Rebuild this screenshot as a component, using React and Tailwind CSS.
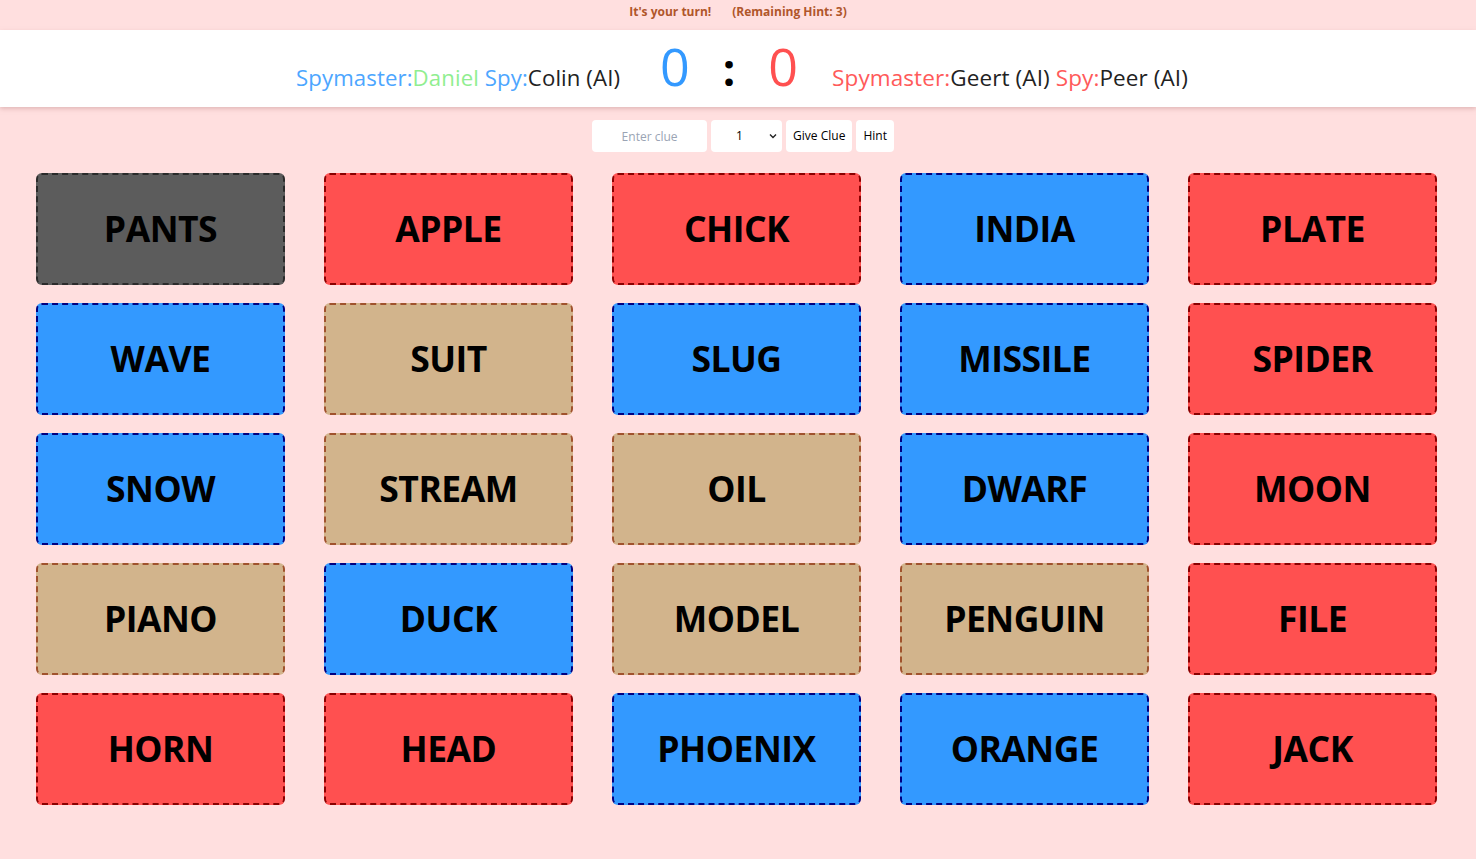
const cards = [
  ['PANTS', 'black'], ['APPLE', 'red'], ['CHICK', 'red'], ['INDIA', 'blue'], ['PLATE', 'red'],
  ['WAVE', 'blue'], ['SUIT', 'tan'], ['SLUG', 'blue'], ['MISSILE', 'blue'], ['SPIDER', 'red'],
  ['SNOW', 'blue'], ['STREAM', 'tan'], ['OIL', 'tan'], ['DWARF', 'blue'], ['MOON', 'red'],
  ['PIANO', 'tan'], ['DUCK', 'blue'], ['MODEL', 'tan'], ['PENGUIN', 'tan'], ['FILE', 'red'],
  ['HORN', 'red'], ['HEAD', 'red'], ['PHOENIX', 'blue'], ['ORANGE', 'blue'], ['JACK', 'red'],
]

const cardStyles = {
  black: 'bg-[#5c5c5c] border-[#2b2b2b]',
  red: 'bg-[#ff5050] border-[#8b0000]',
  blue: 'bg-[#3399ff] border-[#000080]',
  tan: 'bg-[#d2b48c] border-[#a0522d]',
}

function Card({ word, team }) {
  return (
    <div className={`h-[112px] rounded-[6px] border-2 border-dashed flex items-center justify-center ${cardStyles[team]}`}>
      <span className="text-[35.5px] font-bold text-black tracking-[-0.5px]">{word}</span>
    </div>
  )
}

export default function App() {
  return (
    <div className="min-h-[859px] bg-[#ffdfdf] font-['Open_Sans','DejaVu_Sans',sans-serif]">
      <div className="h-[30px] pb-[6px] flex items-center justify-center gap-[20px] text-[12px] font-bold text-[#b0562a]">
        <span>It's your turn!</span>
        <span className="ml-[1px]">(Remaining Hint: 3)</span>
      </div>

      <div className="h-[77px] bg-white shadow-[0_2px_4px_rgba(200,150,150,0.5)] flex items-end justify-center pb-[12px]">
        <div className="flex items-baseline ml-[8px]">
          <div className="text-[22.2px] tracking-[0.1px] mr-[40px]">
            <span className="text-[#4da6ff]">Spymaster:</span>
            <span className="text-[#90ee90]">Daniel</span>
            <span className="text-[#4da6ff]"> Spy:</span>
            <span className="text-[#222]">Colin (AI)</span>
          </div>
          <span className="text-[52px] leading-none text-[#3399ff]">0</span>
          <span className="text-[44px] leading-none text-black mx-[33px] font-bold">:</span>
          <span className="text-[52px] leading-none text-[#ff5050]">0</span>
          <div className="text-[22.5px] tracking-[0.1px] ml-[34px]">
            <span className="text-[#ff5a5a]">Spymaster:</span>
            <span className="text-[#222]">Geert (AI)</span>
            <span className="text-[#ff5a5a]"> Spy:</span>
            <span className="text-[#222]">Peer (AI)</span>
          </div>
        </div>
      </div>

      <div className="flex justify-center gap-[4px] mt-[13px] ml-[10px] text-[12px]">
        <input
          placeholder="Enter clue"
          className="w-[115px] h-[32px] bg-white rounded-[4px] text-center outline-none placeholder:text-[#9aa4b4]"
        />
        <div className="relative w-[71px] h-[32px] bg-white rounded-[4px] flex items-center">
          <span className="ml-[25px] text-black">1</span>
          <svg className="absolute right-[5px] top-[13px]" width="8" height="6" viewBox="0 0 8 6">
            <path d="M1 1.5 L4 4.5 L7 1.5" stroke="#222" strokeWidth="1.4" fill="none" />
          </svg>
        </div>
        <button className="h-[32px] px-[7px] bg-white rounded-[4px] text-black">Give Clue</button>
        <button className="h-[32px] px-[7px] bg-white rounded-[4px] text-black">Hint</button>
      </div>

      <div className="grid grid-cols-5 gap-x-[39px] gap-y-[18px] pl-[36px] pr-[39px] mt-[21px]">
        {cards.map(([w, t]) => (
          <Card key={w} word={w} team={t} />
        ))}
      </div>
    </div>
  )
}
